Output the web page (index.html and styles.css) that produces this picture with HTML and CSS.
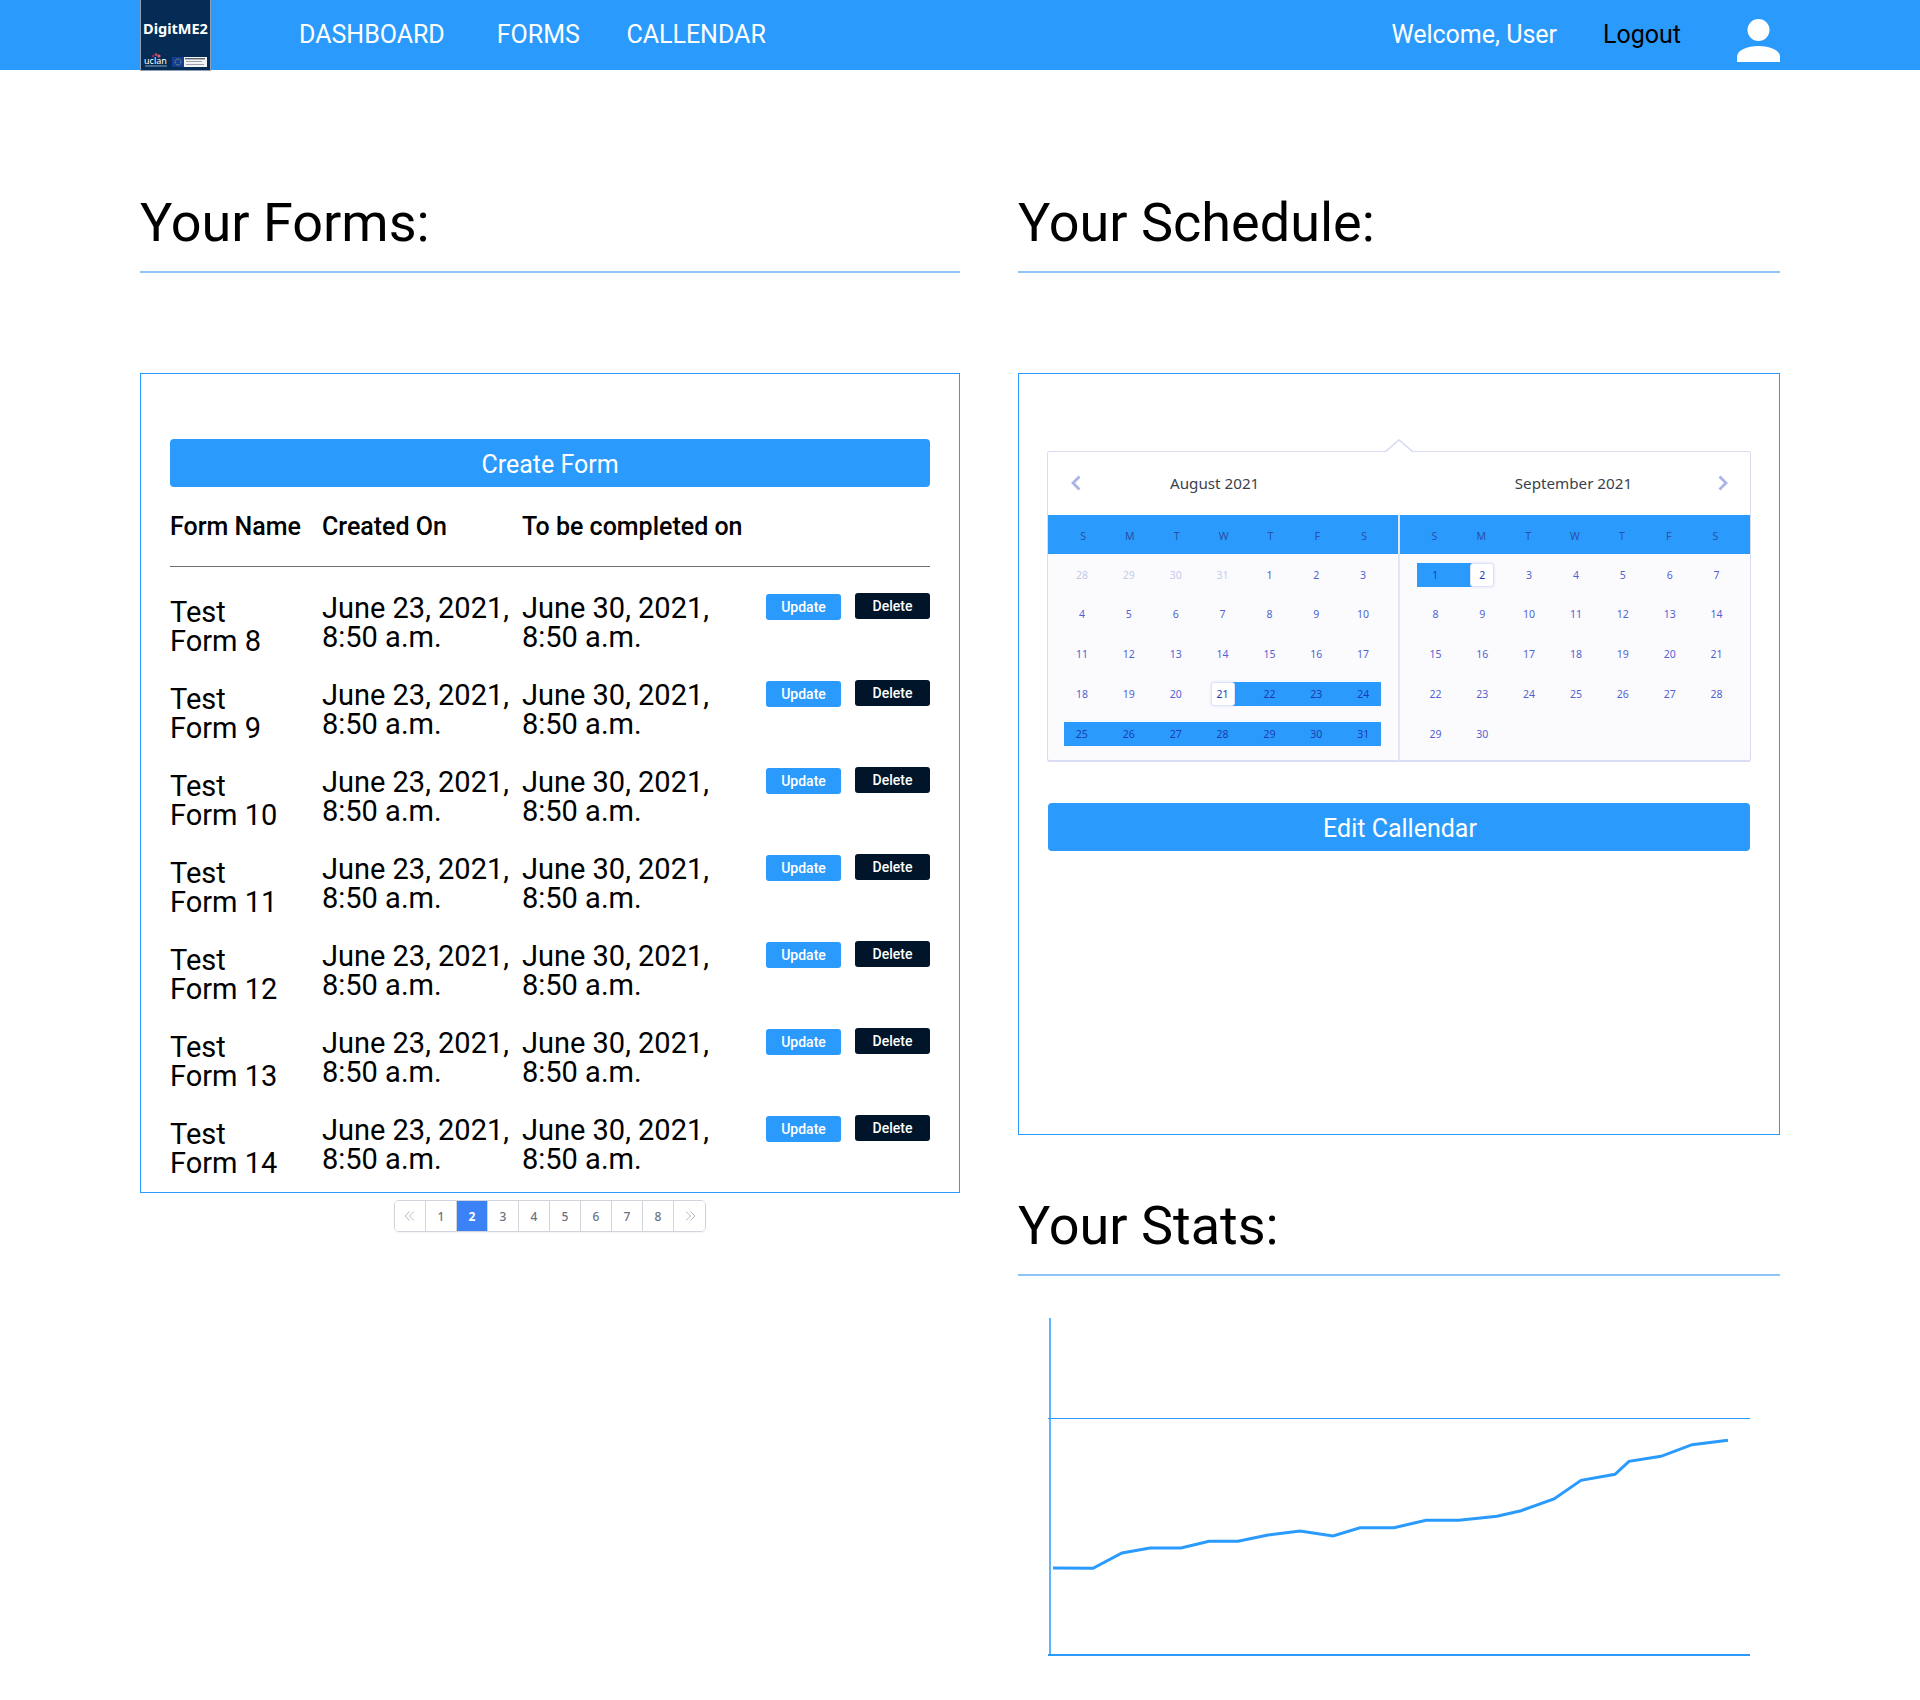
FILE: index.html
```html
<!DOCTYPE html>
<html lang="en">
<head>
<meta charset="utf-8">
<title>DigitME2 Dashboard</title>
<link rel="stylesheet" href="styles.css">
</head>
<body>
<header class="nav">
  <div class="logo">
    <span class="logo-title">DigitME2</span>
    <svg class="logo-foot" viewBox="0 0 70 16" width="70" height="16" aria-hidden="true">
      <circle cx="15" cy="2.5" r="1.6" fill="#c0405a"/><circle cx="18" cy="4" r="1.6" fill="#d8607a"/><circle cx="12" cy="4" r="1.2" fill="#8a3050"/>
      <text x="3" y="12" class="logo-uclan">uclan</text>
      <rect x="4" y="13.5" width="22" height="1" fill="#8fa3bd"/>
      <rect x="31" y="5" width="12" height="10" fill="#123f93"/>
      <circle cx="37" cy="10" r="3" fill="none" stroke="#d9c650" stroke-width=".8" stroke-dasharray="1 1"/>
      <rect x="43" y="5" width="23" height="10" fill="#f2f4f6"/>
      <rect x="44" y="6" width="20" height="1.4" fill="#5b6470"/><rect x="45" y="9" width="16" height="1" fill="#9aa1aa"/><rect x="45" y="12" width="18" height="1" fill="#9aa1aa"/>
    </svg>
  </div>
  <nav class="nav-links">
    <a href="#">DASHBOARD</a>
    <a href="#">FORMS</a>
    <a href="#">CALLENDAR</a>
  </nav>
  <div class="nav-user">
    <span class="welcome">Welcome, User</span>
    <a class="logout" href="#">Logout</a>
    <svg class="user-icon" viewBox="0 0 43 43" width="43" height="43" aria-hidden="true">
      <circle cx="21.5" cy="11" r="11" fill="#fff"/>
      <path d="M0 43V38C0 31 10 27 21.5 27S43 31 43 38V43Z" fill="#fff"/>
    </svg>
  </div>
</header>

<main class="page">
  <section class="col-forms">
    <div class="heading"><h1>Your Forms:</h1></div>
    <div class="panel forms-panel">
      <button class="btn-wide">Create Form</button>
      <div class="row head-row">
        <div>Form Name</div><div>Created On</div><div>To be completed on</div>
      </div>
      <div class="row"><div class="name">Test<br>Form 8</div><div>June 23, 2021,<br>8:50 a.m.</div><div>June 30, 2021,<br>8:50 a.m.</div><div class="actions"><button class="btn-update">Update</button><button class="btn-delete">Delete</button></div></div>
      <div class="row"><div class="name">Test<br>Form 9</div><div>June 23, 2021,<br>8:50 a.m.</div><div>June 30, 2021,<br>8:50 a.m.</div><div class="actions"><button class="btn-update">Update</button><button class="btn-delete">Delete</button></div></div>
      <div class="row"><div class="name">Test<br>Form 10</div><div>June 23, 2021,<br>8:50 a.m.</div><div>June 30, 2021,<br>8:50 a.m.</div><div class="actions"><button class="btn-update">Update</button><button class="btn-delete">Delete</button></div></div>
      <div class="row"><div class="name">Test<br>Form 11</div><div>June 23, 2021,<br>8:50 a.m.</div><div>June 30, 2021,<br>8:50 a.m.</div><div class="actions"><button class="btn-update">Update</button><button class="btn-delete">Delete</button></div></div>
      <div class="row"><div class="name">Test<br>Form 12</div><div>June 23, 2021,<br>8:50 a.m.</div><div>June 30, 2021,<br>8:50 a.m.</div><div class="actions"><button class="btn-update">Update</button><button class="btn-delete">Delete</button></div></div>
      <div class="row"><div class="name">Test<br>Form 13</div><div>June 23, 2021,<br>8:50 a.m.</div><div>June 30, 2021,<br>8:50 a.m.</div><div class="actions"><button class="btn-update">Update</button><button class="btn-delete">Delete</button></div></div>
      <div class="row"><div class="name">Test<br>Form 14</div><div>June 23, 2021,<br>8:50 a.m.</div><div>June 30, 2021,<br>8:50 a.m.</div><div class="actions"><button class="btn-update">Update</button><button class="btn-delete">Delete</button></div></div>
    </div>
    <div class="pager">
      <span class="page-cell"><svg viewBox="0 0 12 10" width="12" height="10" aria-hidden="true"><path d="M5.500 .5L1 5L5.500 9.500M10 .5L5.500 5L10 9.500" fill="none" stroke="#b4b8c2"/></svg></span>
      <span class="page-cell">1</span>
      <span class="page-cell active">2</span>
      <span class="page-cell">3</span>
      <span class="page-cell">4</span>
      <span class="page-cell">5</span>
      <span class="page-cell">6</span>
      <span class="page-cell">7</span>
      <span class="page-cell">8</span>
      <span class="page-cell"><svg viewBox="0 0 12 10" width="12" height="10" aria-hidden="true"><path d="M2 .5L6.500 5L2 9.500M6.500 .5L11 5L6.500 9.500" fill="none" stroke="#b4b8c2"/></svg></span>
    </div>
  </section>

  <section class="col-side">
    <div class="heading"><h1>Your Schedule:</h1></div>
    <div class="panel schedule-panel">
      <div class="cal">
        <svg class="cal-tip" viewBox="0 0 28 14" width="28" height="14" aria-hidden="true"><path d="M0 13L14 1L28 13" fill="#fff" stroke="#d6d9f3" stroke-width="1.500"/></svg>
        <div class="cal-titles">
          <div class="cal-title title-left">
            <svg class="chev" viewBox="0 0 10 16" width="10" height="16" aria-hidden="true"><path d="M8.500 1.500L2 8L8.500 14.500" fill="none" stroke="#aab4e6" stroke-width="2.800"/></svg>
            <span>August 2021</span>
          </div>
          <div class="cal-title title-right">
            <span>September 2021</span>
            <svg class="chev" viewBox="0 0 10 16" width="10" height="16" aria-hidden="true"><path d="M1.500 1.500L8 8L1.500 14.500" fill="none" stroke="#aab4e6" stroke-width="2.800"/></svg>
          </div>
        </div>
        <div class="cal-months">
          <div class="month month-left">
            <div class="week-head"><span>S</span><span>M</span><span>T</span><span>W</span><span>T</span><span>F</span><span>S</span></div>
            <div class="days">
              <span class="mute">28</span><span class="mute">29</span><span class="mute">30</span><span class="mute">31</span><span>1</span><span>2</span><span>3</span>
              <span>4</span><span>5</span><span>6</span><span>7</span><span>8</span><span>9</span><span>10</span>
              <span>11</span><span>12</span><span>13</span><span>14</span><span>15</span><span>16</span><span>17</span>
              <span>18</span><span>19</span><span>20</span><span class="edge edge-start"><i class="today">21</i></span><span class="sel">22</span><span class="sel">23</span><span class="sel end">24</span>
              <span class="sel start">25</span><span class="sel">26</span><span class="sel">27</span><span class="sel">28</span><span class="sel">29</span><span class="sel">30</span><span class="sel end">31</span>
            </div>
          </div>
          <div class="month month-right">
            <div class="week-head"><span>S</span><span>M</span><span>T</span><span>W</span><span>T</span><span>F</span><span>S</span></div>
            <div class="days">
              <span class="sel start">1</span><span class="edge edge-end"><i class="today">2</i></span><span>3</span><span>4</span><span>5</span><span>6</span><span>7</span>
              <span>8</span><span>9</span><span>10</span><span>11</span><span>12</span><span>13</span><span>14</span>
              <span>15</span><span>16</span><span>17</span><span>18</span><span>19</span><span>20</span><span>21</span>
              <span>22</span><span>23</span><span>24</span><span>25</span><span>26</span><span>27</span><span>28</span>
              <span>29</span><span>30</span>
            </div>
          </div>
        </div>
      </div>
      <button class="btn-wide btn-cal">Edit Callendar</button>
    </div>
    <div class="heading stats-heading"><h1>Your Stats:</h1></div>
    <svg class="chart" viewBox="0 0 740 350" width="740" height="350" aria-label="Stats line chart">
      <path class="chart-axis" d="M10 9V346"/>
      <path class="chart-grid" d="M8 109.500H710"/>
      <path class="chart-base" d="M8 346H710"/>
      <path class="chart-line" d="M13 259L53 259.300L82 244L110 239L141 239L169 232.300L198 232.300L228 226L260 222L293 227L320 218.700L354 218.700L386 211.300L419 211.300L457 207.300L481 201.700L514 190L541 171.300L575 165.300L589 152.300L621 147.300L652 135.700L688 131.300"/>
    </svg>
  </section>
</main>
</body>
</html>
```
FILE: styles.css
```css
* { box-sizing: border-box; }
html, body { margin: 0; padding: 0; background: #fff; }
body { font-family: Roboto, "Liberation Sans", sans-serif; color: #000; min-height: 1700px; }
button { font-family: inherit; border: 0; cursor: pointer; }
a { text-decoration: none; color: inherit; }

.nav {
  height: 70px;
  background: #2a9bfd;
  padding: 0 140px 0 140px;
  display: flex;
  align-items: flex-start;
  font-size: 25px;
  color: #fff;
}
.logo {
  width: 71px;
  height: 71px;
  flex: none;
  background: #052c55;
  border: 1px solid #8da0b5;
  border-top: 0;
  display: flex;
  flex-direction: column;
  align-items: center;
  position: relative;
  overflow: hidden;
}
.logo-title {
  font-family: "Noto Sans", sans-serif;
  font-weight: 700;
  font-size: 14.500px;
  line-height: 16px;
  margin-top: 20px;
  white-space: nowrap;
}
.logo-foot { position: absolute; left: 0; bottom: 2px; }
.logo-uclan { font-family: "Noto Sans", sans-serif; font-size: 9px; fill: #fff; }
.nav-links { display: flex; margin-left: 88px; height: 68px; align-items: center; }
.nav-links a:nth-child(2) { margin-left: 52px; }
.nav-links a:nth-child(3) { margin-left: 46.500px; }
.nav-user { margin-left: auto; display: flex; align-items: center; height: 68px; }
.logout { color: #000; margin-left: 46px; }
.user-icon { margin-left: 56px; margin-top: 12px; }

.page {
  display: grid;
  grid-template-columns: 820px 762px;
  column-gap: 58px;
  padding: 0 140px;
  align-items: start;
}
.heading {
  height: 203px;
  border-bottom: 2px solid #8ec5f6;
  display: flex;
  align-items: flex-end;
  padding-bottom: 14px;
}
.heading h1 { margin: 0; font-weight: 400; font-size: 54px; line-height: 68px; }
.panel { border: 1px solid #2a9bfd; margin-top: 100px; }

.forms-panel { height: 820px; padding: 65px 29px 0; overflow: hidden; }
.btn-wide {
  display: block;
  width: 100%;
  height: 48px;
  background: #2a9bfd;
  color: #fff;
  font-size: 25px;
  border-radius: 4px;
  padding: 2px 0 0;
}
.row {
  display: grid;
  grid-template-columns: 152px 200px 1fr 164px;
  height: 87px;
  font-size: 29px;
  line-height: 29px;
  padding-top: 27px;
  white-space: nowrap;
}
.row .name { padding-top: 4px; }
.head-row {
  height: 80px;
  padding-top: 25px;
  font-size: 25px;
  font-weight: 500;
  line-height: 30px;
  border-bottom: 1px solid #6f6f6f;
  grid-template-columns: 152px 200px 1fr;
}
.actions { display: flex; gap: 14px; justify-content: flex-end; align-items: flex-start; margin-top: -1px; }
.btn-update, .btn-delete {
  width: 75px;
  height: 26px;
  font-size: 14px;
  font-weight: 500;
  color: #fff;
  border-radius: 3px;
  padding: 0;
}
.btn-update { background: #2a9bfd; margin-top: 1px; }
.btn-delete { background: #001529; }

.pager {
  display: flex;
  width: max-content;
  margin: 7px auto 0;
  border: 1px solid #d1d5db;
  border-radius: 5px;
  box-shadow: 0 1px 2px rgba(0,0,0,.05);
  overflow: hidden;
}
.page-cell {
  width: 31px;
  height: 30px;
  display: flex;
  align-items: center;
  justify-content: center;
  font-size: 12px;
  font-weight: 500;
  color: #6b7280;
  background: #fff;
  border-left: 1px solid #d1d5db;
  font-family: "Noto Sans", sans-serif;
}
.page-cell:first-child { border-left: 0; width: 30px; }
.page-cell:last-child { width: 32px; }
.page-cell.active { background: #3b82f6; color: #fff; font-weight: 700; }

.schedule-panel { height: 762px; padding: 77px 29px 0; }
.cal {
  position: relative;
  height: 311px;
  margin: 0 -1px;
  border: 1px solid #d9dcf5;
  border-width: 1.500px 1px 2px 1px;
  border-radius: 3px;
  background: #fbfbfe;
  font-family: "Noto Sans", sans-serif;
}
.cal-tip { position: absolute; top: -13px; left: 337px; }
.cal-titles { display: flex; height: 63px; background: #fff; border-radius: 3px 3px 0 0; }
.cal-title { flex: 1; position: relative; font-size: 15.200px; color: #3b3f4c; padding-top: 20px; line-height: 22px; }
.title-left { padding-left: 122px; }
.title-right { padding-left: 109.500px; }
.chev { position: absolute; top: 23px; }
.title-left .chev { left: 23px; }
.title-right .chev { right: 22px; }
.cal-months { display: flex; height: 246px; }
.month { flex: 1; }
.month-left { border-right: 2px solid #e2e4f7; }
.week-head {
  height: 39px;
  background: #2a9bfd;
  display: grid;
  grid-template-columns: repeat(7, 46.850px);
  align-items: center;
  text-align: center;
  font-size: 10.500px;
  color: #2a4fa6;
  padding-top: 2px;
}
.days {
  display: grid;
  grid-template-columns: repeat(7, 46.850px);
  grid-auto-rows: 24px;
  row-gap: 15.800px;
  padding-top: 8.500px;
  font-size: 10.500px;
  color: #5262d2;
}
.days span { display: flex; align-items: center; justify-content: center; }
.month-left .week-head { padding-left: 11.600px; }
.month-left .days { padding-left: 10.600px; }
.month-right .week-head { padding-left: 11px; }
.month-right .days { padding-left: 12px; }
.days .mute { color: #c5c9ec; }
.days .sel { background: #2a9bfd; color: #1d3bb0; }
.days .start { border-left: 5.500px solid transparent; padding-right: 5.500px; background-clip: padding-box; border-radius: 3px 0 0 3px; }
.days .end { border-right: 6.500px solid transparent; padding-left: 6.500px; background-clip: padding-box; border-radius: 0 3px 3px 0; }
.edge-start { background: linear-gradient(to right, transparent 50%, #2a9bfd 50%); }
.edge-end { background: linear-gradient(to right, #2a9bfd 50%, transparent 50%); }
.today {
  width: 24px;
  height: 24px;
  display: flex;
  align-items: center;
  justify-content: center;
  font-style: normal;
  background: #fff;
  color: #1d3bb0;
  border: 1px solid #dfe3f8;
  border-radius: 3px;
  box-shadow: 0 0 3px rgba(80,100,220,.2);
}
.btn-cal { margin-top: 41px; padding-left: 2px; }

.stats-heading { height: 141px; }
.chart { display: block; margin-top: 33px; margin-left: 22px; }
.chart-axis { stroke: #2a9bfd; stroke-width: 1.500; fill: none; }
.chart-grid { stroke: #2a9bfd; stroke-width: 1; fill: none; }
.chart-base { stroke: #2a9bfd; stroke-width: 2; fill: none; }
.chart-line { stroke: #2a9bfd; stroke-width: 3; fill: none; }
```
